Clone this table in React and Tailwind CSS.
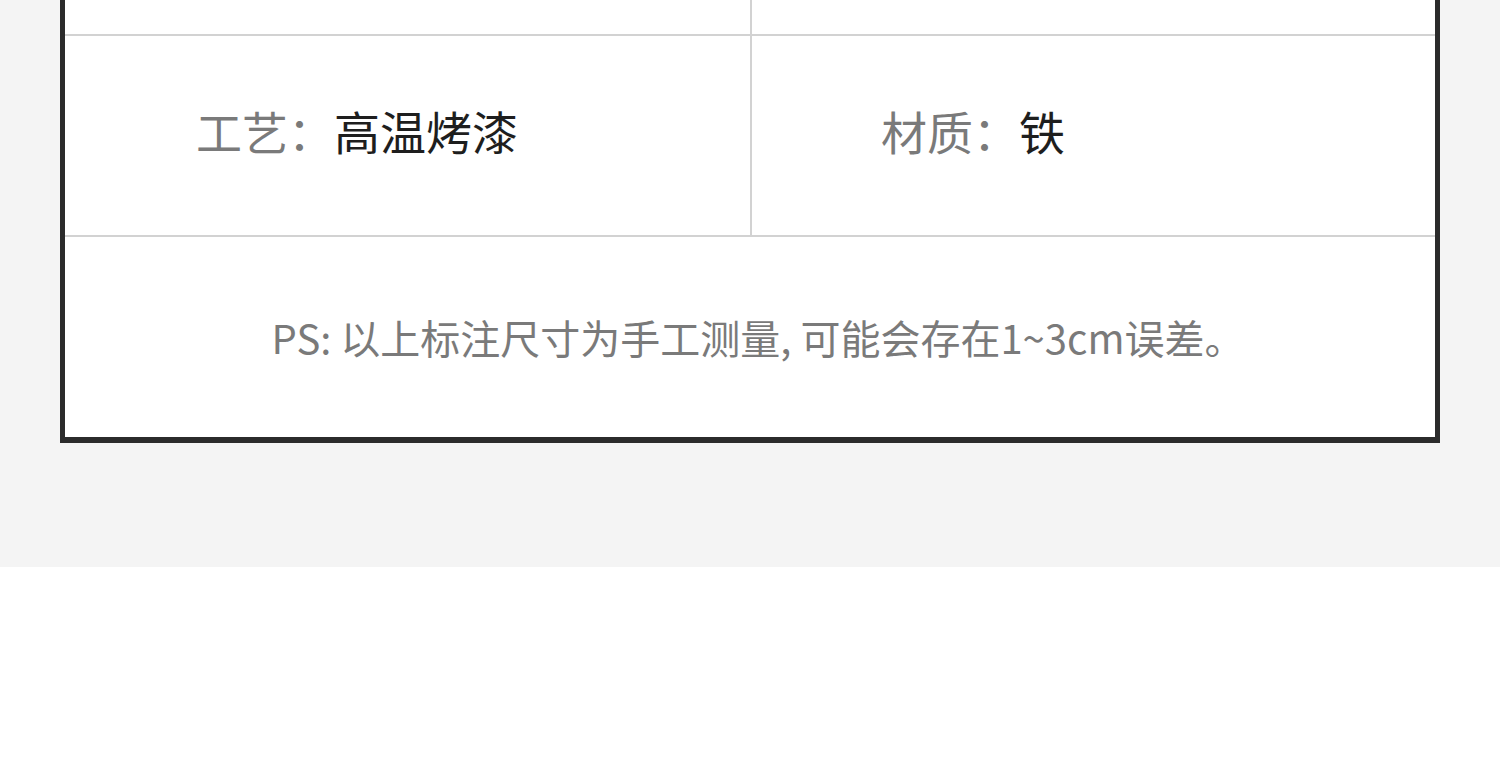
export default function App() {
  const font = { fontFamily: '"Noto Sans CJK SC", "Noto Sans", sans-serif' };
  return (
    <div className="w-[1500px] h-[757px] bg-white" style={font}>
      <div className="h-[567px] bg-[#f4f4f4] px-[60px]">
        <div className="w-[1380px] border-x-[5px] border-b-[6px] border-[#2b2b2b] bg-white">
          <div className="grid grid-cols-2 h-[36px] border-b-2 border-[#d2d2d2]">
            <div />
            <div className="border-l-2 border-[#d2d2d2]" />
          </div>
          <div className="grid grid-cols-2 h-[201px] border-b-2 border-[#d2d2d2]">
            <div className="flex items-center pl-[131px] pb-[12px] text-[46px] leading-none">
              <span className="text-[#7a7a7a]">工艺：</span>
              <span className="text-[#1e1e1e]">高温烤漆</span>
            </div>
            <div className="flex items-center pl-[129px] pb-[12px] border-l-2 border-[#d2d2d2] text-[46px] leading-none">
              <span className="text-[#7a7a7a]">材质：</span>
              <span className="text-[#1e1e1e]">铁</span>
            </div>
          </div>
          <div className="h-[200px] flex items-center justify-center pl-[16px]">
            <span className="text-[40px] leading-none text-[#7a7a7a]">
              PS: 以上标注尺寸为手工测量, 可能会存在1~3cm误差。
            </span>
          </div>
        </div>
      </div>
    </div>
  );
}
